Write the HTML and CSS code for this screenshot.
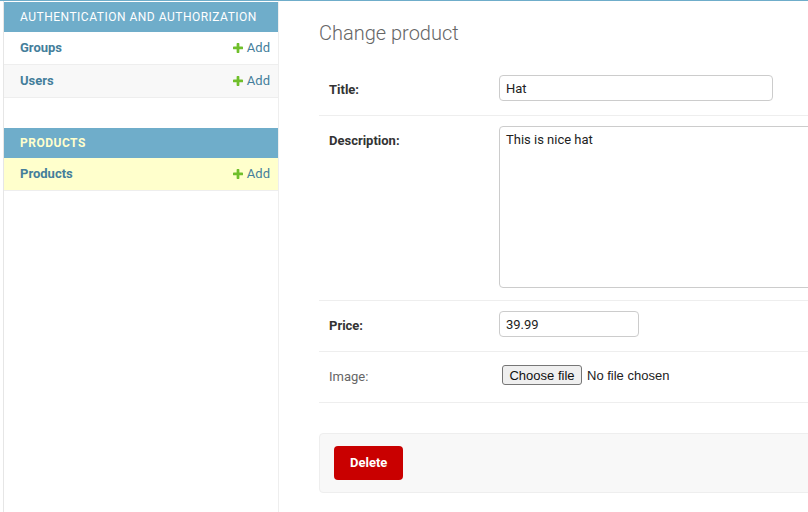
FILE: index.html
```html
<!DOCTYPE html>
<html lang="en">
<head>
<meta charset="utf-8">
<title>Change product</title>
<link rel="stylesheet" href="styles.css">
</head>
<body>
<div class="topline"></div>
<div class="layout">
  <div class="toggle"></div>
  <nav class="sidebar">
    <div class="module">
      <div class="caption">Authentication and Authorization</div>
      <div class="navrow">
        <a class="model" href="#">Groups</a>
        <a class="addlink" href="#"><svg width="10" height="10" viewBox="192 192 1408 1408"><path fill="#70bf2b" d="M1600 796v192q0 40-28 68t-68 28h-416v416q0 40-28 68t-68 28h-192q-40 0-68-28t-28-68v-416h-416q-40 0-68-28t-28-68v-192q0-40 28-68t68-28h416v-416q0-40 28-68t68-28h192q40 0 68 28t28 68v416h416q40 0 68 28t28 68z"/></svg>Add</a>
      </div>
      <div class="navrow alt">
        <a class="model" href="#">Users</a>
        <a class="addlink" href="#"><svg width="10" height="10" viewBox="192 192 1408 1408"><path fill="#70bf2b" d="M1600 796v192q0 40-28 68t-68 28h-416v416q0 40-28 68t-68 28h-192q-40 0-68-28t-28-68v-416h-416q-40 0-68-28t-28-68v-192q0-40 28-68t68-28h416v-416q0-40 28-68t68-28h192q40 0 68 28t28 68v416h416q40 0 68 28t28 68z"/></svg>Add</a>
      </div>
    </div>
    <div class="module">
      <div class="caption current">Products</div>
      <div class="navrow selected">
        <a class="model" href="#">Products</a>
        <a class="addlink" href="#"><svg width="10" height="10" viewBox="192 192 1408 1408"><path fill="#70bf2b" d="M1600 796v192q0 40-28 68t-68 28h-416v416q0 40-28 68t-68 28h-192q-40 0-68-28t-28-68v-416h-416q-40 0-68-28t-28-68v-192q0-40 28-68t68-28h416v-416q0-40 28-68t68-28h192q40 0 68 28t28 68v416h416q40 0 68 28t28 68z"/></svg>Add</a>
      </div>
    </div>
  </nav>
  <main class="main">
    <div class="content">
      <h1 class="title">Change product</h1>
      <form class="form">
        <div class="form-row">
          <label class="required">Title:</label>
          <input class="vTextField" type="text" value="Hat">
        </div>
        <div class="form-row tall">
          <label class="required">Description:</label>
          <textarea class="vLargeTextField">This is nice hat</textarea>
        </div>
        <div class="form-row">
          <label class="required">Price:</label>
          <input class="vPrice" type="text" value="39.99">
        </div>
        <div class="form-row">
          <label>Image:</label>
          <div class="file-wrap">
            <button class="filebtn" type="button">Choose file</button>
            <span class="filename">No file chosen</span>
          </div>
        </div>
        <div class="submit-row">
          <a class="deletelink" href="#">Delete</a>
        </div>
      </form>
    </div>
  </main>
</div>
</body>
</html>
```

FILE: styles.css
```css
html, body {
  margin: 0;
  padding: 0;
  background: #fff;
}
body {
  font-family: Roboto, "Noto Sans", sans-serif;
  font-size: 13px;
  color: #333;
}
a {
  text-decoration: none;
}
.topline {
  height: 1px;
  background: #6fadca;
}
.layout {
  display: flex;
  min-height: 511px;
}
.toggle {
  flex: 0 0 3px;
  border-right: 1px solid #e6e6e6;
}
.sidebar {
  flex: 0 0 274px;
  border-right: 1px solid #eee;
  border-top: 1px solid transparent;
}
.module {
  margin-bottom: 30px;
}
.caption {
  background: #6fadca;
  color: #fff;
  font-size: 12px;
  line-height: 14px;
  letter-spacing: 0.5px;
  text-transform: uppercase;
  padding: 8px 16px;
}
.caption.current {
  color: #ffc;
  font-weight: bold;
}
.navrow {
  display: flex;
  justify-content: space-between;
  align-items: center;
  padding: 8px 8px 8px 16px;
  line-height: 16px;
  border-bottom: 1px solid #eee;
  background: #fff;
}
.navrow.alt {
  background: #f8f8f8;
}
.navrow.selected {
  background: #ffc;
}
.model {
  color: #447e9b;
  font-weight: bold;
}
.addlink {
  color: #447e9b;
  display: flex;
  align-items: center;
  gap: 4px;
}
.main {
  flex: 1 1 auto;
  min-width: 0;
  overflow: hidden;
  padding: 20px 0 0 40px;
}
.content {
  width: 900px;
}
.title {
  margin: 0 0 20px;
  font-size: 20px;
  line-height: 24px;
  font-weight: 300;
  color: #666;
}
.form-row {
  display: flex;
  align-items: flex-start;
  padding: 10px 10px 14px;
  border-bottom: 1px solid #eee;
}
.form-row.tall {
  padding-bottom: 12px;
}
.form-row label {
  flex: 0 0 160px;
  padding: 8px 10px 0 0;
  line-height: 13px;
  font-size: 13px;
  color: #666;
}
.form-row label.required {
  font-weight: bold;
  color: #333;
}
.vTextField, .vPrice, .vLargeTextField {
  box-sizing: border-box;
  margin: 0;
  border: 1px solid #ccc;
  border-radius: 4px;
  padding: 5px 6px;
  font-family: Roboto, "Noto Sans", sans-serif;
  font-size: 13px;
  color: #222;
  background: #fff;
}
.vTextField {
  width: 274px;
  height: 26px;
}
.vPrice {
  width: 140px;
  height: 26px;
}
.vLargeTextField {
  display: block;
  width: 620px;
  height: 162px;
  resize: none;
  line-height: 16px;
}
.file-wrap {
  height: 26px;
  display: flex;
  align-items: center;
  gap: 5px;
  padding-left: 3px;
  font-family: "Liberation Sans", Arial, sans-serif;
  font-size: 13px;
  color: #222;
}
.filebtn {
  box-sizing: border-box;
  height: 20px;
  width: 80px;
  margin: 0;
  padding: 0 6px;
  border: 1px solid #767676;
  border-radius: 3px;
  background: #efefef;
  font-family: "Liberation Sans", Arial, sans-serif;
  font-size: 13px;
  color: #111;
}
.submit-row {
  display: flex;
  margin-top: 30px;
  padding: 12px 14px;
  background: #f8f8f8;
  border: 1px solid #eee;
  border-radius: 4px;
}
.deletelink {
  display: block;
  background: #c90000;
  color: #fff;
  border-radius: 4px;
  padding: 10px 16px;
  line-height: 14px;
  font-size: 13px;
  font-weight: bold;
}
```
